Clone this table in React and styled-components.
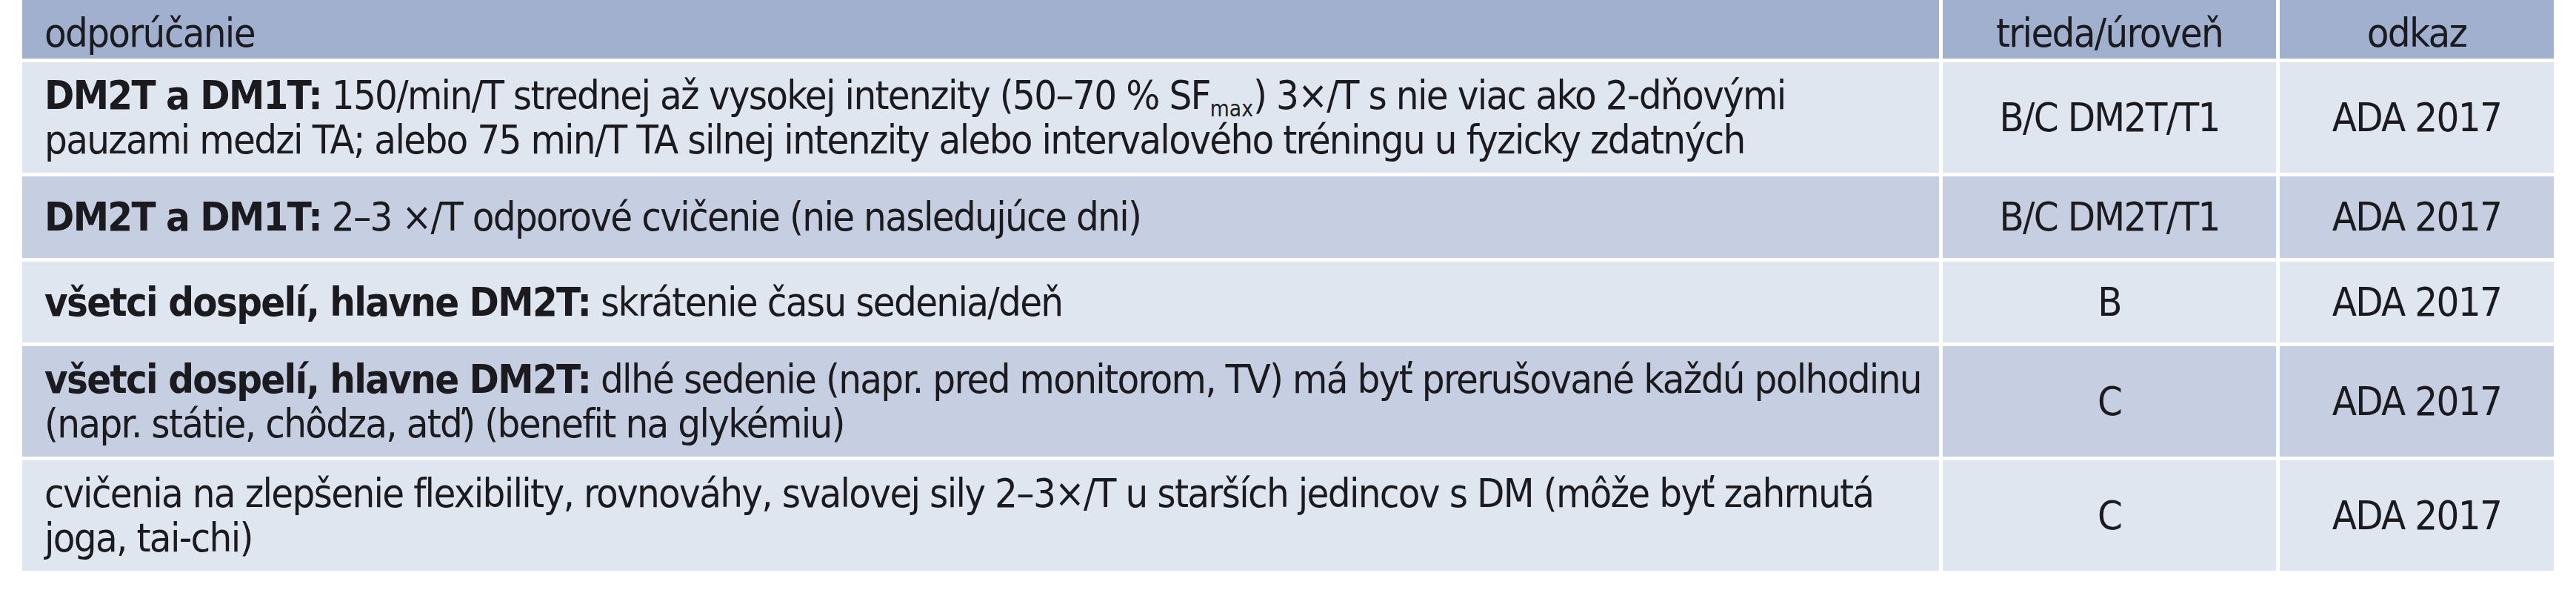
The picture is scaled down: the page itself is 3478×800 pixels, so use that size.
import React from 'react';
import styled, { createGlobalStyle } from 'styled-components';

const GlobalStyle = createGlobalStyle`
  html, body {
    margin: 0;
    padding: 0;
    background: #fff;
  }
  body {
    font-family: "Liberation Sans Narrow", "DejaVu Sans Condensed", "Open Sans", Roboto, sans-serif;
    font-stretch: condensed;
    color: #1b1b1f;
  }
`;

const tones = {
  head: '#a0b0ce',
  dark: '#c6cee1',
  light: '#e0e6f0',
};

const Table = styled.div`
  display: flex;
  flex-direction: column;
  gap: 5px;
  margin-left: 30px;
  width: 3418px;
`;

const Row = styled.div`
  display: grid;
  grid-template-columns: 2588px 450px 370px;
  gap: 5px;
  height: ${({ $h }) => $h}px;
`;

const Cell = styled.div`
  display: flex;
  align-items: center;
  justify-content: ${({ $center }) => ($center ? 'center' : 'flex-start')};
  padding-left: ${({ $center }) => ($center ? '0' : '30px')};
  padding-top: ${({ $tone }) => ($tone === 'head' ? '10px' : '0')};
  background: ${({ $tone }) => tones[$tone]};
  font-size: 54px;
  letter-spacing: -1.7px;
  line-height: 60px;
  white-space: nowrap;
  overflow: hidden;

  b {
    font-weight: 700;
  }
`;

const Sub = styled.sub`
  font-size: 0.55em;
  letter-spacing: 0;
  line-height: 0;
  vertical-align: -0.35em;
`;

const rows = [
  {
    tone: 'light',
    h: 149,
    text: (
      <>
        <b>DM2T a DM1T:</b> 150/min/T strednej až vysokej intenzity (50–70 % SF<Sub>max</Sub>) 3×/T s nie viac ako 2-dňovými
        <br />
        pauzami medzi TA; alebo 75 min/T TA silnej intenzity alebo intervalového tréningu u fyzicky zdatných
      </>
    ),
    level: 'B/C DM2T/T1',
    ref: 'ADA 2017',
  },
  {
    tone: 'dark',
    h: 110,
    text: (
      <>
        <b>DM2T a DM1T:</b> 2–3 ×/T odporové cvičenie (nie nasledujúce dni)
      </>
    ),
    level: 'B/C DM2T/T1',
    ref: 'ADA 2017',
  },
  {
    tone: 'light',
    h: 109,
    text: (
      <>
        <b>všetci dospelí, hlavne DM2T:</b> skrátenie času sedenia/deň
      </>
    ),
    level: 'B',
    ref: 'ADA 2017',
  },
  {
    tone: 'dark',
    h: 149,
    text: (
      <>
        <b>všetci dospelí, hlavne DM2T:</b> dlhé sedenie (napr. pred monitorom, TV) má byť prerušované každú polhodinu
        <br />
        (napr. státie, chôdza, atď) (benefit na glykémiu)
      </>
    ),
    level: 'C',
    ref: 'ADA 2017',
  },
  {
    tone: 'light',
    h: 149,
    text: (
      <>
        cvičenia na zlepšenie flexibility, rovnováhy, svalovej sily 2–3×/T u starších jedincov s DM (môže byť zahrnutá
        <br />
        joga, tai-chi)
      </>
    ),
    level: 'C',
    ref: 'ADA 2017',
  },
];

const App = () => (
  <>
    <GlobalStyle />
    <Table>
      <Row $h={79}>
        <Cell $tone="head">odporúčanie</Cell>
        <Cell $tone="head" $center>trieda/úroveň</Cell>
        <Cell $tone="head" $center>odkaz</Cell>
      </Row>
      {rows.map((r, i) => (
        <Row key={i} $h={r.h}>
          <Cell $tone={r.tone}>
            <span>{r.text}</span>
          </Cell>
          <Cell $tone={r.tone} $center>{r.level}</Cell>
          <Cell $tone={r.tone} $center>{r.ref}</Cell>
        </Row>
      ))}
    </Table>
  </>
);

export default App;
